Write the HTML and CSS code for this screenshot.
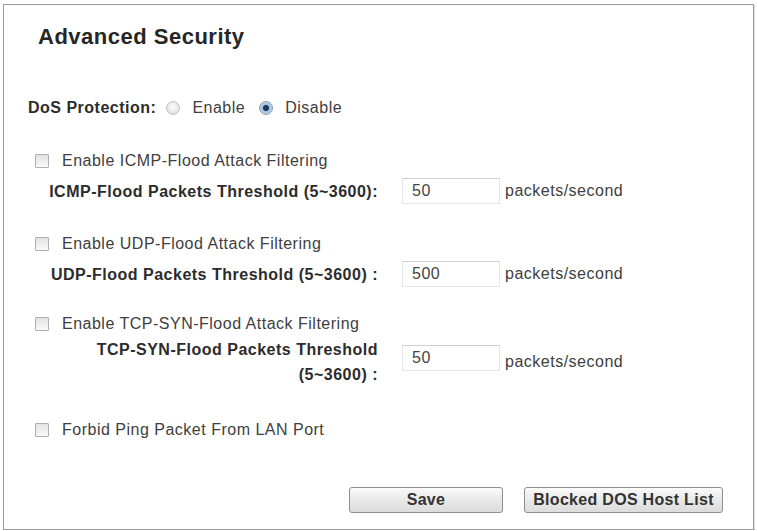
FILE: index.html
```html
<!DOCTYPE html>
<html lang="en">
<head>
    <meta charset="UTF-8">
    <title>Advanced Security</title>
    <link rel="stylesheet" href="styles.css">
</head>
<body>
    <form class="panel">
        <h1 class="title">Advanced Security</h1>

        <div class="row dos-row">
            <span class="strong">DoS Protection:</span>
            <input type="radio" name="dos" class="radio" id="dosOn">
            <label for="dosOn">Enable</label>
            <input type="radio" name="dos" class="radio" id="dosOff" checked>
            <label for="dosOff">Disable</label>
        </div>

        <div class="row check-row first">
            <input type="checkbox" class="check" id="icmp">
            <label for="icmp">Enable ICMP-Flood Attack Filtering</label>
        </div>
        <div class="row field-row">
            <span class="field-label">ICMP-Flood Packets Threshold (5~3600):</span>
            <input type="text" class="field" value="50">
            <span class="unit">packets/second</span>
        </div>

        <div class="row check-row">
            <input type="checkbox" class="check" id="udp">
            <label for="udp">Enable UDP-Flood Attack Filtering</label>
        </div>
        <div class="row field-row">
            <span class="field-label">UDP-Flood Packets Threshold (5~3600) :</span>
            <input type="text" class="field" value="500">
            <span class="unit">packets/second</span>
        </div>

        <div class="row check-row tcp">
            <input type="checkbox" class="check" id="syn">
            <label for="syn">Enable TCP-SYN-Flood Attack Filtering</label>
        </div>
        <div class="row field-row wrap">
            <span class="field-label">TCP-SYN-Flood Packets Threshold (5~3600) :</span>
            <input type="text" class="field" value="50">
            <span class="unit">packets/second</span>
        </div>

        <div class="row check-row ping">
            <input type="checkbox" class="check" id="ping">
            <label for="ping">Forbid Ping Packet From LAN Port</label>
        </div>

        <div class="actions">
            <button type="button" class="btn save">Save</button>
            <button type="button" class="btn list">Blocked DOS Host List</button>
        </div>
    </form>
</body>
</html>
```

FILE: styles.css
```css
body {
    margin: 0;
    background: #fff;
    font-family: 'Liberation Sans', Arial, sans-serif;
    font-size: 16px;
    letter-spacing: 0.5px;
    color: #404040;
}

.panel {
    box-sizing: border-box;
    width: 751px;
    height: 526px;
    margin: 4px 0 0 3px;
    border: 1px solid #9c9c9c;
    box-shadow: 1px 1px 0 #dcdcdc;
    padding-top: 19px;
    display: flex;
    flex-direction: column;
}

.title {
    margin: 0 0 0 34px;
    font-size: 22px;
    line-height: 26px;
    font-weight: bold;
    color: #262626;
}

.row {
    display: flex;
    align-items: center;
    height: 26px;
}

.strong {
    font-weight: bold;
    color: #2c2c2c;
}

/* DoS protection switch */
.dos-row {
    margin: 45px 0 0 24px;
}

.radio {
    appearance: none;
    -webkit-appearance: none;
    width: 14px;
    height: 14px;
    margin: 0 12px 0 10px;
    border: 1px solid #c2c2c2;
    border-radius: 50%;
    background: radial-gradient(circle at 50% 40%, #fdfdfd, #d6d6d6);
}

.radio:checked {
    border-color: #7f9cb8;
    background: radial-gradient(circle, #163a63 0 2.5px, #9fbcd6 3.5px, #e6eef6 100%);
}

.radio + label {
    margin-right: 4px;
}

/* checkbox rows */
.check-row {
    margin: 26px 0 0 31px;
}

.check-row.first {
    margin-top: 27px;
}

.check-row.tcp {
    margin-top: 23px;
}

.check-row.ping {
    margin-top: 30px;
}

.check {
    appearance: none;
    -webkit-appearance: none;
    width: 14px;
    height: 14px;
    margin: 0 13px 0 0;
    border: 1px solid #b0b0b0;
    border-radius: 1px;
    background: linear-gradient(#e2e2e2, #f9f9f9);
}

/* threshold fields */
.field-row {
    height: 28px;
    margin-top: 3px;
}

.field-row.wrap {
    height: 50px;
    margin-top: 0;
}

.field-label {
    box-sizing: border-box;
    width: 374px;
    padding-left: 34px;
    text-align: right;
    font-weight: bold;
    line-height: 25px;
    color: #2c2c2c;
}

.field {
    box-sizing: border-box;
    width: 98px;
    height: 26px;
    margin: 0 0 0 24px;
    padding: 0 0 0 9px;
    border: 1px solid #e6e6e6;
    border-top-color: #cfcfcf;
    font: inherit;
    letter-spacing: inherit;
    color: #444;
    background: #fff;
}

.wrap .field {
    margin-top: -8px;
}

.unit {
    margin-left: 5px;
}

/* bottom buttons */
.actions {
    display: flex;
    justify-content: flex-end;
    gap: 21px;
    margin: 44px 30px 0 0;
}

.btn {
    height: 26px;
    padding: 0;
    border: 1px solid #8d8d8d;
    border-radius: 3px;
    background: linear-gradient(#fafafa, #e9e9e9 50%, #dcdcdc);
    font-family: inherit;
    font-size: 16px;
    font-weight: bold;
    letter-spacing: 0.3px;
    color: #333;
}

.btn.save {
    width: 154px;
}

.btn.list {
    width: 199px;
}
```
